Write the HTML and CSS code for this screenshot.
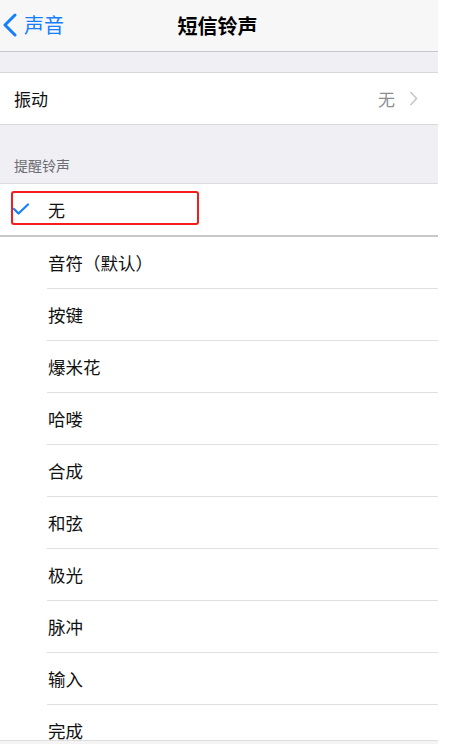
FILE: index.html
```html
<!DOCTYPE html>
<html lang="zh-CN">
<head>
  <meta charset="UTF-8">
  <meta name="viewport" content="width=device-width, initial-scale=1.0">
  <title>短信铃声</title>
  <link rel="stylesheet" href="styles.css">
</head>
<body>

  <div class="pantalla">
    <nav class="navbar">
      <a class="volver" href="#">
        <svg width="14" height="26" viewBox="0 0 14 26">
          <path d="M12 3 L2 13 L12 23" fill="none" stroke="#157efb" stroke-width="3" stroke-linecap="round" stroke-linejoin="round"/>
        </svg>
        <span>声音</span>
      </a>
      <h1>短信铃声</h1>
    </nav>

    <div class="espacio"></div>

    <div class="fila-ajuste">
      <span>振动</span>
      <span class="valor">无
        <svg width="9" height="15" viewBox="0 0 9 15">
          <path d="M1.5 1 L7.5 7.5 L1.5 14" fill="none" stroke="#c7c7cc" stroke-width="1.6"/>
        </svg>
      </span>
    </div>

    <div class="seccion">提醒铃声</div>

    <div class="seleccionado">
      <svg class="check" width="18" height="14" viewBox="0 0 18 14">
        <path d="M2 6 L6.5 10.5 L16 1.5" fill="none" stroke="#157efb" stroke-width="2.2" stroke-linecap="round" stroke-linejoin="round"/>
      </svg>
      <span>无</span>
      <div class="marca"></div>
    </div>

    <ul class="tonos">
      <li>音符（默认）</li>
      <li>按键</li>
      <li>爆米花</li>
      <li>哈喽</li>
      <li>合成</li>
      <li>和弦</li>
      <li>极光</li>
      <li>脉冲</li>
      <li>输入</li>
      <li>完成</li>
    </ul>

    <div class="barra-inferior"></div>
  </div>

</body>
</html>
```

FILE: styles.css
```css
* {
  margin: 0;
  padding: 0;
  box-sizing: border-box;
}

body {
  font-family: "Noto Sans CJK SC", "Noto Sans", sans-serif;
  background-color: #ffffff;
  color: #111;
}

.pantalla {
  position: relative;
  width: 438px;
  height: 744px;
  overflow: hidden;
  background-color: #fff;
}

.navbar {
  position: relative;
  height: 52px;
  background-color: #f7f7f8;
  border-bottom: 1px solid #c8c7cc;
  display: flex;
  align-items: center;
  justify-content: center;
}

.navbar h1 {
  font-size: 20px;
  font-weight: bold;
  color: #000;
  margin-left: -3px;
}

.volver {
  position: absolute;
  left: 3px;
  top: 12px;
  display: flex;
  align-items: center;
  gap: 7px;
  text-decoration: none;
  color: #157efb;
  font-size: 20px;
}

.volver span {
  line-height: 26px;
}

.espacio {
  height: 21px;
  background-color: #efeff4;
  border-bottom: 1px solid #d8d8dc;
}

.fila-ajuste {
  height: 52px;
  display: flex;
  justify-content: space-between;
  align-items: center;
  padding: 0 20px 0 14px;
  border-bottom: 1px solid #d8d8dc;
  font-size: 17px;
}

.fila-ajuste .valor {
  display: flex;
  align-items: center;
  gap: 14px;
  color: #8e8e93;
}

.seccion {
  height: 59px;
  background-color: #efeff4;
  border-bottom: 1px solid #dcdce0;
  padding: 30px 0 0 14px;
  font-size: 14px;
  color: #6d6d72;
}

.seleccionado {
  position: relative;
  height: 53px;
  display: flex;
  align-items: center;
  font-size: 17px;
  border-bottom: 2px solid #c8c8c8;
}

.seleccionado .check {
  margin-left: 12px;
  margin-right: 18px;
}

.marca {
  position: absolute;
  left: 11px;
  top: 7px;
  width: 188px;
  height: 34px;
  border: 2px solid #f41c1c;
  border-radius: 3px;
}

.tonos {
  list-style: none;
}

.tonos li {
  height: 52px;
  margin-left: 47px;
  padding-left: 1px;
  display: flex;
  align-items: center;
  border-bottom: 1px solid #e0e0e2;
  font-size: 17.5px;
}

.barra-inferior {
  position: absolute;
  left: 0;
  right: 0;
  bottom: 0;
  height: 4px;
  background-color: #f4f4f5;
  border-top: 1px solid #dedede;
}
```
